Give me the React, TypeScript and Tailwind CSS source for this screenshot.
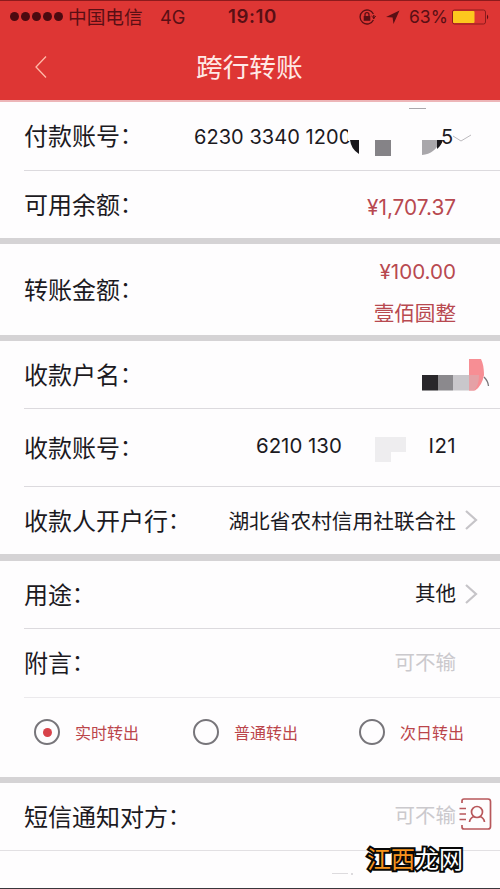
import type { ReactNode } from "react";

const CJK = "font-['Noto_Sans_CJK_SC',sans-serif]";
const NUM = "font-[Inter,'Noto_Sans_CJK_SC',sans-serif]";

function Label({ children }: { children: string }) {
  return (
    <span className="flex text-[24px] leading-none whitespace-nowrap text-[#1c1a1f]">
      {children}
      <span className="relative top-[-1px] text-[22px]">：</span>
    </span>
  );
}

function Row({ label, className, children }: { label: string; className: string; children?: ReactNode }) {
  return (
    <div className={`flex shrink-0 items-center pb-[2px] pl-6 ${className}`}>
      <Label>{label}</Label>
      {children}
    </div>
  );
}

function Line({ className = "ml-6 bg-[#dcdade]" }: { className?: string }) {
  return <div className={`h-px shrink-0 ${className}`} />;
}

function Band({ className }: { className: string }) {
  return <div className={`shrink-0 bg-[#d5d3d5] ${className}`} />;
}

function Chevron() {
  return (
    <svg className="ml-2 mr-[22px] h-5 w-[14px] shrink-0" viewBox="0 0 14 20" fill="none" stroke="#c6c4c8" strokeWidth="2.2">
      <path d="M2 1 L12 10 L2 19" />
    </svg>
  );
}

function Radio({ label, checked, className }: { label: string; checked?: boolean; className: string }) {
  return (
    <div className={`flex items-center ${className}`}>
      <span className="flex size-[26px] shrink-0 items-center justify-center rounded-full border-2 border-[#77757a]">
        {checked && <span className="size-[9px] rounded-full bg-[#d8424a]" />}
      </span>
      <span className="ml-[15px] text-[16px] leading-none whitespace-nowrap text-[#bb454b]">{label}</span>
    </div>
  );
}

export default function App() {
  return (
    <div lang="zh-CN" className={`relative flex h-[889px] w-[500px] flex-col overflow-hidden bg-[#fefdfe] ${CJK}`}>
      <header className="h-[100px] shrink-0 border-t border-[#8d1a1c] bg-[#de3634]">
        <div className="flex h-[33px] items-center pl-[10px] text-[#590f14]">
          <div className="flex gap-[2px] pb-[2px]">
            {[0, 1, 2, 3, 4].map((i) => (
              <span key={i} className="size-[9px] rounded-full bg-[#4c0a10]" />
            ))}
          </div>
          <span className="ml-[5px] w-[75px] pb-[2px] text-[18.7px] leading-none whitespace-nowrap">中国电信</span>
          <span className={`ml-[17px] w-[68px] text-[18.2px] leading-none ${NUM}`}>4G</span>
          <span className={`w-[130px] text-[18.7px] leading-none font-semibold tracking-[0.6px] ${NUM}`}>19:10</span>
          <svg className="mb-[2px] h-[18px] w-[18px]" viewBox="0 0 18 18" fill="none" stroke="#590f14" strokeWidth="1.3">
            <path d="M15.4 6 A7 7 0 1 0 15.4 12" />
            <path d="M15.8 7 V11" />
            <path d="M13.5 8 L15.8 10.2 L17.8 8" strokeWidth="1" />
            <rect x="5.7" y="8" width="6.6" height="4.8" fill="#590f14" stroke="none" />
            <path d="M7 8 V6.7 A2 2 0 0 1 11 6.7 V8" />
          </svg>
          <svg className="ml-[9px] h-[15px] w-[15px]" viewBox="0 0 15 15" fill="#590f14">
            <path d="M14.5 0.5 L8.5 14 L7.6 7.6 L1 7 Z" />
          </svg>
          <span className={`ml-[9px] w-[42px] pb-px text-[17.5px] leading-none ${NUM}`}>63%</span>
          <svg className="mb-[2px] h-4 w-[38px]" viewBox="0 0 38 16">
            <rect x="1.5" y="1" width="33" height="14" rx="2" fill="none" stroke="#8d1b1d" strokeWidth="1" />
            <rect x="2" y="2" width="21.5" height="12" rx="1" fill="#fdc81e" />
            <path d="M36 5.5 Q38.5 8 36 10.5 Z" fill="#590f14" />
          </svg>
        </div>
        <div className="flex h-[66px] items-center pb-px pl-[35px] text-[#ffe9e6]">
          <svg className="h-6 w-3" viewBox="0 0 12 24" fill="none" stroke="#ffb9a8" strokeWidth="1.3">
            <path d="M11 1.5 L1 12 L11 22.5" />
          </svg>
          <h1 className="ml-[149px] text-[26.7px] leading-none font-normal whitespace-nowrap">跨行转账</h1>
        </div>
      </header>
      <div className="h-[2px] shrink-0 bg-[#edb5b8]" />

      <Row label="付款账号" className="h-[68px]">
        <div className={`relative mt-[2px] ml-[52px] h-[68px] w-[286px] text-[20px] text-[#1c1a1f] ${NUM}`}>
          <span className="absolute top-[22px] left-0 leading-[26px] tracking-[0.05px] whitespace-nowrap">6230 3340 1200</span>
          <span className="absolute top-[22px] left-[247px] leading-[26px]">5</span>
          <svg className="absolute top-0 left-[150px] h-[68px] w-[130px]" viewBox="344 102 130 68">
            <path d="M348 126 H356 V148 H350 V141 H348 Z" fill="#fefdfe" />
            <path d="M350 140 H359 V154 Q351 149 350 140 Z" fill="#19171b" />
            <path d="M375 140 H391 V156 H375 Z" fill="#858387" />
            <path d="M422 140 H441 Q435 154 422 155 Z" fill="#a9a7ab" />
            <path d="M437 140 H443 Q441 146 437 149 Z" fill="#19171b" />
            <path d="M409 108.5 H426" stroke="#aaa8ac" />
            <path d="M453 136 L461 141 L471 135" fill="none" stroke="#bcbabe" />
          </svg>
        </div>
      </Row>
      <Line />
      <Row label="可用余额" className="h-[67px]">
        <span className={`mt-[10px] mr-11 ml-auto text-[20.8px] leading-none text-[#b84950] ${NUM}`}>¥1,707.37</span>
      </Row>
      <Band className="h-[6px]" />
      <Row label="转账金额" className="h-[91px]">
        <div className="mt-[8px] mr-11 ml-auto flex flex-col items-end gap-[19px] leading-none text-[#b84950]">
          <span className={`text-[20.6px] leading-none ${NUM}`}>¥100.00</span>
          <span className="text-[20.6px] leading-none">壹佰圆整</span>
        </div>
      </Row>
      <Band className="h-[6px]" />
      <Row label="收款户名" className="h-[67px]">
        <svg className="mt-[2px] mr-[10px] ml-auto h-[34px] w-[69px]" viewBox="421 358 69 34">
          <path d="M422 375 H438 V390.500 H422 Z" fill="#29272b" />
          <path d="M438 375 H453 V390.500 H438 Z" fill="#8b898d" />
          <path d="M453 375 H469 V390.500 H453 Z" fill="#c9c7cb" />
          <path d="M469 359 H481 Q484 365 484 375 Q482 386 475 390.500 H469 Z" fill="#f78e94" />
          <path d="M469 375 H479 Q479 386 474 390.500 H469 Z" fill="#e5a1a6" />
          <path d="M484 377 Q488 381 488.500 386" fill="none" stroke="#77757a" strokeWidth="1.3" />
        </svg>
      </Row>
      <Line />
      <Row label="收款账号" className="h-[77px]">
        <div className={`ml-[114px] flex w-[200px] items-center text-[20.4px] leading-none text-[#1c1a1f] ${NUM}`}>
          <span className="w-[119px] whitespace-nowrap">6210 130</span>
          <svg className="mt-[5px] h-[26px] w-[32px]" viewBox="0 0 32 26" fill="#eeedef">
            <path d="M0 1 H31 V16 H16 V26 H0 Z" />
          </svg>
          <span className="ml-auto tracking-[0.4px]">I21</span>
        </div>
      </Row>
      <Line />
      <Row label="收款人开户行" className="h-[67px]">
        <span className="mt-[2px] ml-auto text-[20.7px] leading-none whitespace-nowrap text-[#1c1a1f]">湖北省农村信用社联合社</span>
        <Chevron />
      </Row>
      <Band className="h-[7px]" />
      <Row label="用途" className="h-[67px]">
        <span className="mb-[2px] ml-auto text-[20.5px] leading-none text-[#1c1a1f]">其他</span>
        <Chevron />
      </Row>
      <Line />
      <Row label="附言" className="h-[68px]">
        <span className="mr-11 mb-[2px] ml-auto text-[20.5px] leading-none text-[#cbc9cd]">可不输</span>
      </Row>
      <Line className="ml-6 bg-[#ebe9ec]" />
      <div className="flex h-[79px] shrink-0 items-center pb-[11px] pl-[34px]">
        <Radio label="实时转出" checked className="w-[159px]" />
        <Radio label="普通转出" className="w-[166px]" />
        <Radio label="次日转出" className="w-[106px]" />
      </div>
      <Band className="h-[6px]" />
      <Row label="短信通知对方" className="h-[67px]">
        <span className="mb-[2px] ml-auto text-[20.5px] leading-none text-[#cbc9cd]">可不输</span>
        <svg className="mr-[8px] mb-[4px] ml-[3px] h-8 w-[33px]" viewBox="459 797 33 32" fill="none" stroke="#b8575b" strokeWidth="1.7">
          <path d="M462 802 V800 Q462 798 464 798 H488 Q490.500 798 490.500 800.500 V825.500 Q490.500 828 488 828 H464 Q462 828 462 826 V824" />
          <path d="M459.500 807.500 H466 M459.500 813 H466 M459.500 818.500 H466" />
          <circle cx="477" cy="811" r="5.500" />
          <path d="M469.500 821 Q470 817 474 815.500 M480 815.500 Q484 817 484.500 821" />
        </svg>
      </Row>
      <Line className="bg-[#e2e0e3]" />
      <div className="flex h-[37px] shrink-0 items-start pt-[22px] pl-[332px]">
        <span className="h-px w-4 bg-[#dddbde]" />
        <span className="ml-[3px] size-[2px] bg-[#dddbde]" />
      </div>
      <div className="h-px shrink-0 bg-[#39373c]" />

      <div className="absolute top-[845px] left-[367px] flex text-[24px] leading-[26px] whitespace-nowrap [-webkit-text-stroke:4px_#080808] [paint-order:stroke_fill]">
        <span className="text-[#f7941f]">江西</span>
        <span className="text-white">龙网</span>
      </div>
    </div>
  );
}
